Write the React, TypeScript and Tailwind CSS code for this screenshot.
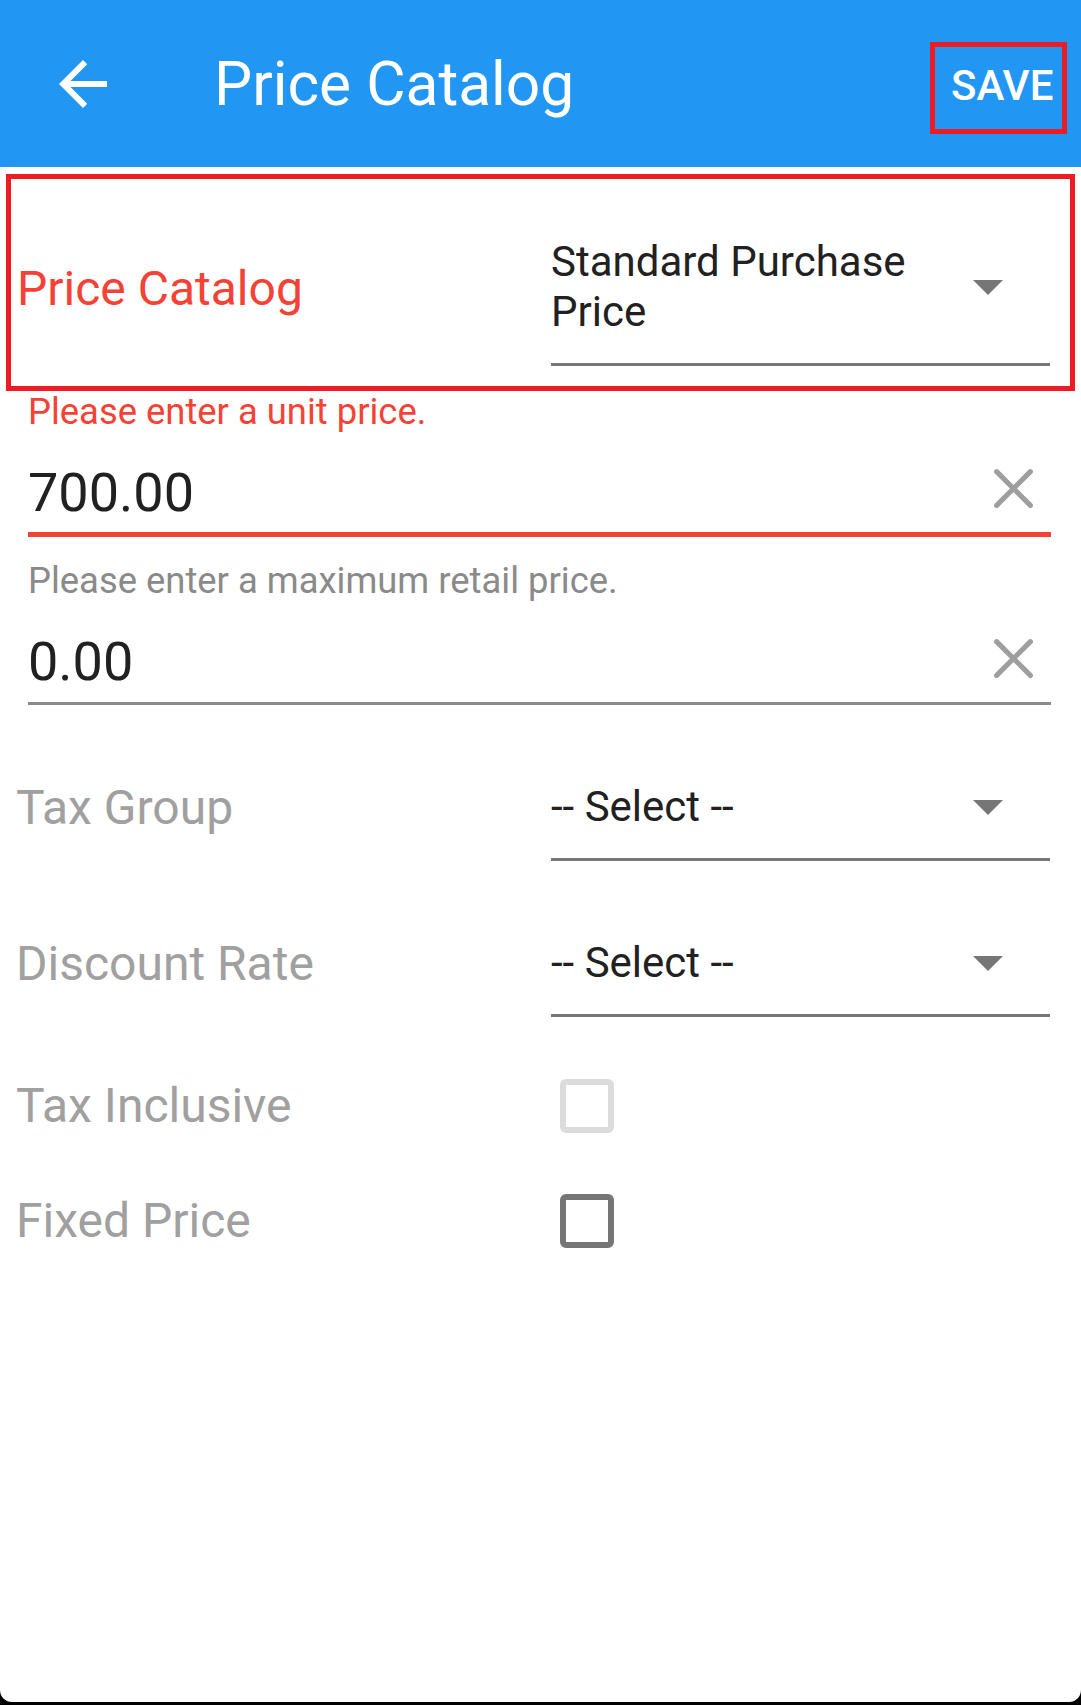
import type { ReactNode } from 'react'

function BackArrow() {
  return (
    <svg width="72" height="72" viewBox="0 0 24 24" fill="#ffffff">
      <path d="M20 11H7.83l5.59-5.59L12 4l-8 8 8 8 1.41-1.41L7.83 13H20v-2z" />
    </svg>
  )
}

function ClearIcon({ className }: { className?: string }) {
  return (
    <svg width="45" height="45" viewBox="4 4 16 16" className={className}>
      <path d="M6 6L18 18M18 6L6 18" stroke="#9e9e9e" strokeWidth="1.8" strokeLinecap="round" fill="none" />
    </svg>
  )
}

function Caret() {
  return <div className="w-0 h-0 border-l-[15px] border-r-[15px] border-t-[15px] border-l-transparent border-r-transparent border-t-[#767676] shrink-0 mr-[47px] ml-[8px]" />
}

function SelectBox({ children }: { children: ReactNode }) {
  return (
    <div className="flex items-center border-b-[3px] border-[#767676] pb-[26px]">
      <div className="flex-1 text-[42px] leading-[50px] text-[#212121]">{children}</div>
      <Caret />
    </div>
  )
}

function SelectRow({ label, value }: { label: string; value: string }) {
  return (
    <div className="flex items-start ml-[16px] mr-[31px]">
      <div className="w-[535px] text-[48px] leading-[56px] text-[#a0a0a0] -mt-[2px]">{label}</div>
      <div className="flex-1">
        <SelectBox>{value}</SelectBox>
      </div>
    </div>
  )
}

function CheckRow({ label, disabled }: { label: string; disabled?: boolean }) {
  return (
    <div className="flex items-center ml-[16px]">
      <div className="w-[535px] text-[48px] leading-[56px] text-[#a0a0a0]">{label}</div>
      <div
        className={
          disabled
            ? 'ml-[9px] w-[54px] h-[54px] rounded-[6px] border-[6px] border-[#dcdcdc]'
            : 'ml-[9px] w-[54px] h-[54px] rounded-[6px] border-[6px] border-[#767676]'
        }
      />
    </div>
  )
}

export default function App() {
  return (
    <div className="w-[1081px] h-[1705px] bg-black font-['Roboto',sans-serif] overflow-hidden">
      {/* app bar */}
      <div className="h-[167px] bg-[#2196f3] flex items-center">
        <div className="ml-[47px]">
          <BackArrow />
        </div>
        <div className="ml-[95px] pt-[4px] text-[60.5px] leading-none text-white flex-1">Price Catalog</div>
        <div className="mr-[14px] mt-[9px] w-[137px] h-[92px] border-[5px] border-[#ed1c24] flex items-center pl-[16px] pb-[4px]">
          <span className="text-[42px] leading-[42px] font-medium text-white">SAVE</span>
        </div>
      </div>

      <div className="h-[1535px] bg-white rounded-b-[12px] pt-[7px]">
        {/* price catalog select, highlighted */}
        <div className="mx-[6px] border-[5px] border-[#ed1c24] flex items-start">
          <div className="w-[540px] pl-[6px] mt-[82px] text-[48px] leading-[56px] text-[#f44336]">Price Catalog</div>
          <div className="flex-1 mt-[58px] mb-[20px] mr-[20px]">
            <SelectBox>Standard Purchase Price</SelectBox>
          </div>
        </div>

        {/* unit price */}
        <div className="ml-[28px] mr-[30px]">
          <div className="text-[36.4px] leading-[41px] text-[#f44336]">Please enter a unit price.</div>
          <div className="mt-[30px] flex items-center border-b-[5px] border-[#f44336] pb-[8px]">
            <div className="flex-1 text-[54px] leading-[62px] text-[#212121]">700.00</div>
            <ClearIcon className="mr-[15px] mb-[9px]" />
          </div>

          <div className="mt-[23px] text-[36.4px] leading-[41px] text-[#8a8a8a]">Please enter a maximum retail price.</div>
          <div className="mt-[30px] flex items-center border-b-[3px] border-[#8a8a8a] pb-[9px]">
            <div className="flex-1 text-[54px] leading-[62px] text-[#212121]">0.00</div>
            <ClearIcon className="mr-[15px] mb-[7px]" />
          </div>
        </div>

        <div className="mt-[77px]">
          <SelectRow label="Tax Group" value="-- Select --" />
        </div>
        <div className="mt-[77px]">
          <SelectRow label="Discount Rate" value="-- Select --" />
        </div>

        <div className="mt-[61px]">
          <CheckRow label="Tax Inclusive" disabled />
        </div>
        <div className="mt-[59px]">
          <CheckRow label="Fixed Price" />
        </div>
      </div>
    </div>
  )
}
